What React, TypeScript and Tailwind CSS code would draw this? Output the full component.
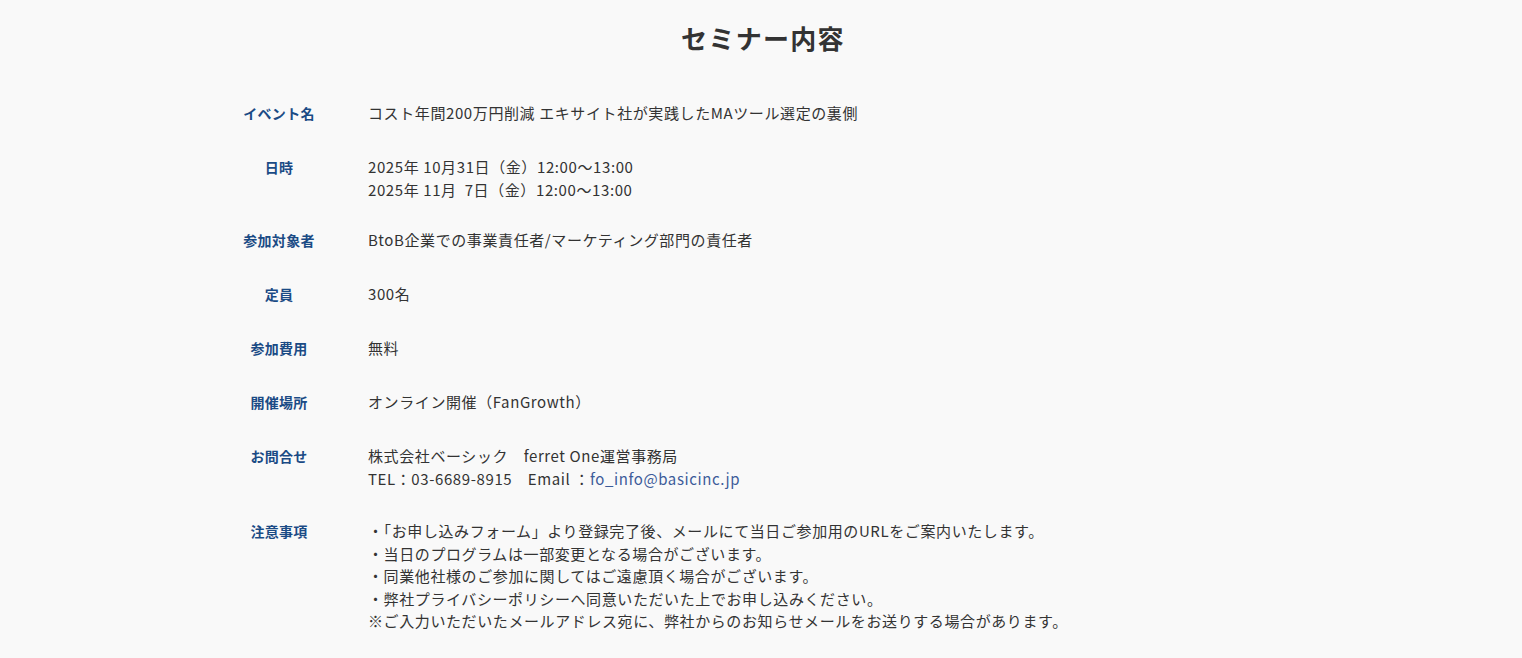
const rows: { label: string; lines: React.ReactNode[]; tight?: boolean }[] = [
  { label: "イベント名", lines: ["コスト年間200万円削減 エキサイト社が実践したMAツール選定の裏側"] },
  {
    label: "日時",
    tight: true,
    lines: [
      "2025年 10月31日（金）12:00〜13:00",
      <>2025年 11月&nbsp;&nbsp;7日（金）12:00〜13:00</>,
    ],
  },
  { label: "参加対象者", lines: ["BtoB企業での事業責任者/マーケティング部門の責任者"] },
  { label: "定員", lines: ["300名"] },
  { label: "参加費用", lines: ["無料"] },
  { label: "開催場所", lines: ["オンライン開催（FanGrowth）"] },
  {
    label: "お問合せ",
    lines: [
      <>株式会社ベーシック&emsp;ferret One運営事務局</>,
      <>
        TEL：03-6689-8915&emsp;Email ：<a className="text-[#3d5c9a]">fo_info@basicinc.jp</a>
      </>,
    ],
  },
  {
    label: "注意事項",
    lines: [
      "・「お申し込みフォーム」より登録完了後、メールにて当日ご参加用のURLをご案内いたします。",
      "・当日のプログラムは一部変更となる場合がございます。",
      "・同業他社様のご参加に関してはご遠慮頂く場合がございます。",
      "・弊社プライバシーポリシーへ同意いただいた上でお申し込みください。",
      "※ご入力いただいたメールアドレス宛に、弊社からのお知らせメールをお送りする場合があります。",
    ],
  },
];

export default function App() {
  return (
    <div
      className="min-h-[658px] bg-[#f9f9f9] text-[#333]"
      style={{ fontFamily: '"Noto Sans CJK JP", "Noto Sans", sans-serif' }}
    >
      <div className="mx-auto w-[1060px] pt-[20px]">
        <h2 className="pl-[4px] text-center text-[26px] font-bold leading-[36px] tracking-[0.05em] text-[#333]">
          セミナー内容
        </h2>

        <div className="mt-[31px] grid grid-cols-[96px_1fr] gap-x-[41px]">
          {rows.map((r) => (
            <div key={r.label} className="contents">
              <div className="min-h-[54px] pt-[15px] text-center text-[14px] font-bold leading-[22.5px] tracking-[0.02em] text-[#1b4b85]">
                {r.label}
              </div>
              <div
                className={
                  r.tight
                    ? "min-h-[54px] pt-[15px] pb-[13px] text-[15px] leading-[22.5px] tracking-[0.04em]"
                    : "min-h-[54px] py-[15px] text-[15px] leading-[22.5px] tracking-[0.04em]"
                }
              >
                {r.lines.map((l, i) => (
                  <p key={i}>{l}</p>
                ))}
              </div>
            </div>
          ))}
        </div>
      </div>
    </div>
  );
}
